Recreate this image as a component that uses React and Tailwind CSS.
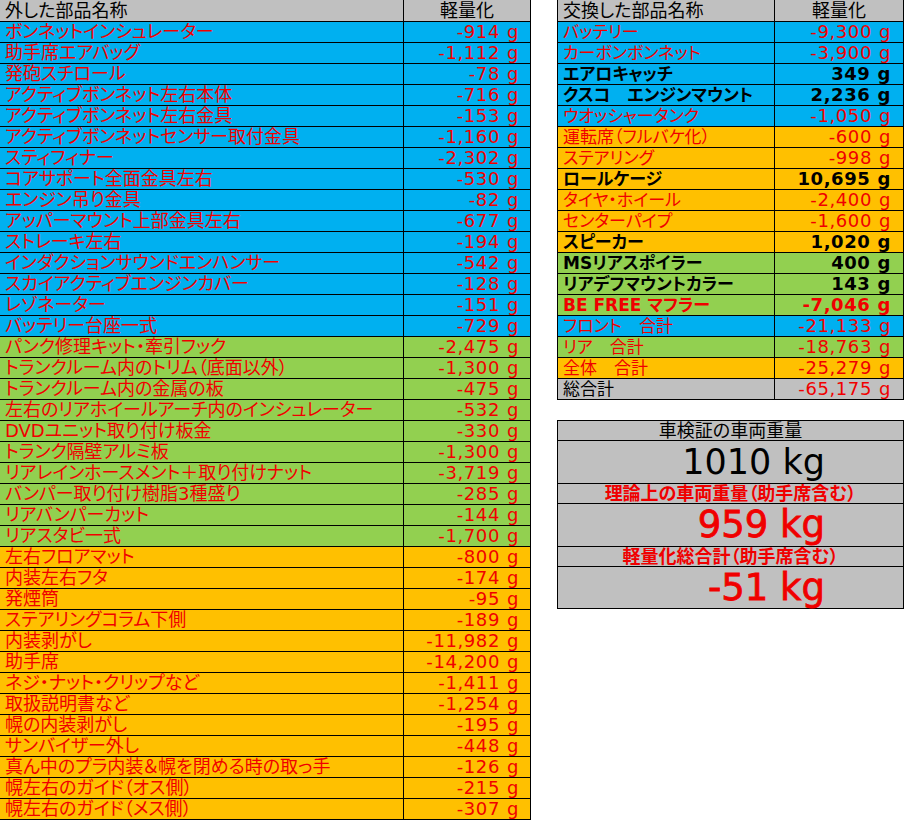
import React from "react";

const BLUE = "bg-[#00b0f0]";
const GREEN = "bg-[#92d050]";
const ORANGE = "bg-[#ffc000]";
const GRAY = "bg-[#c0c0c0]";

const left = [
  ["ボンネットインシュレーター", "-914", BLUE],
  ["助手席エアバッグ", "-1,112", BLUE],
  ["発砲スチロール", "-78", BLUE],
  ["アクティブボンネット左右本体", "-716", BLUE],
  ["アクティブボンネット左右金具", "-153", BLUE],
  ["アクティブボンネットセンサー取付金具", "-1,160", BLUE],
  ["スティフィナー", "-2,302", BLUE],
  ["コアサポート全面金具左右", "-530", BLUE],
  ["エンジン吊り金具", "-82", BLUE],
  ["アッパーマウント上部金具左右", "-677", BLUE],
  ["ストレーキ左右", "-194", BLUE],
  ["インダクションサウンドエンハンサー", "-542", BLUE],
  ["スカイアクティブエンジンカバー", "-128", BLUE],
  ["レゾネーター", "-151", BLUE],
  ["バッテリー台座一式", "-729", BLUE],
  ["パンク修理キット・牽引フック", "-2,475", GREEN],
  ["トランクルーム内のトリム（底面以外）", "-1,300", GREEN],
  ["トランクルーム内の金属の板", "-475", GREEN],
  ["左右のリアホイールアーチ内のインシュレーター", "-532", GREEN],
  ["DVDユニット取り付け板金", "-330", GREEN],
  ["トランク隔壁アルミ板", "-1,300", GREEN],
  ["リアレインホースメント＋取り付けナット", "-3,719", GREEN],
  ["バンパー取り付け樹脂3種盛り", "-285", GREEN],
  ["リアバンパーカット", "-144", GREEN],
  ["リアスタビ一式", "-1,700", GREEN],
  ["左右フロアマット", "-800", ORANGE],
  ["内装左右フタ", "-174", ORANGE],
  ["発煙筒", "-95", ORANGE],
  ["ステアリングコラム下側", "-189", ORANGE],
  ["内装剥がし", "-11,982", ORANGE],
  ["助手席", "-14,200", ORANGE],
  ["ネジ・ナット・クリップなど", "-1,411", ORANGE],
  ["取扱説明書など", "-1,254", ORANGE],
  ["幌の内装剥がし", "-195", ORANGE],
  ["サンバイザー外し", "-448", ORANGE],
  ["真ん中のプラ内装＆幌を閉める時の取っ手", "-126", ORANGE],
  ["幌左右のガイド（オス側）", "-215", ORANGE],
  ["幌左右のガイド（メス側）", "-307", ORANGE],
];

const right = [
  ["バッテリー", "-9,300", BLUE, "r", "r"],
  ["カーボンボンネット", "-3,900", BLUE, "r", "r"],
  ["エアロキャッチ", "349", BLUE, "b", "b"],
  ["クスコ　エンジンマウント", "2,236", BLUE, "b", "b"],
  ["ウオッシャータンク", "-1,050", BLUE, "r", "r"],
  ["運転席（フルバケ化）", "-600", ORANGE, "r", "r"],
  ["ステアリング", "-998", ORANGE, "r", "r"],
  ["ロールケージ", "10,695", ORANGE, "b", "b"],
  ["タイヤ・ホイール", "-2,400", ORANGE, "r", "r"],
  ["センターパイプ", "-1,600", ORANGE, "r", "r"],
  ["スピーカー", "1,020", ORANGE, "b", "b"],
  ["MSリアスポイラー", "400", GREEN, "b", "b"],
  ["リアデフマウントカラー", "143", GREEN, "b", "b"],
  ["BE FREE マフラー", "-7,046", GREEN, "rb", "rb"],
  ["フロント　合計", "-21,133", BLUE, "r", "r"],
  ["リア　合計", "-18,763", GREEN, "r", "r"],
  ["全体　合計", "-25,279", ORANGE, "r", "r"],
  ["総合計", "-65,175", GRAY, "k", "r"],
];

const styleCls = {
  r: "text-[#f00000] font-normal",
  rb: "text-[#f00000] font-bold",
  b: "text-black font-bold",
  k: "text-black font-normal",
};

const JP = "font-['DejaVu_Sans','Noto_Sans_CJK_JP',sans-serif] [font-feature-settings:'palt']";
const NUM = "font-['DejaVu_Sans','Noto_Sans_CJK_JP',sans-serif]";

function Num({ v, cls }) {
  return (
    <span className={`${NUM} text-[18px] tracking-[0.6px] leading-[20px] whitespace-nowrap ${cls}`}>
      {v}
      <span className="ml-[7px]">g</span>
    </span>
  );
}

function LeftRow({ label, value, bg }) {
  return (
    <div className={`flex h-[21px] border-b border-black ${bg}`}>
      <div className={`w-[404px] shrink-0 border-r border-black pl-[5px] overflow-hidden whitespace-nowrap ${JP} text-[18px] leading-[20px] text-[#f00000]`}>
        {label}
      </div>
      <div className="flex-1 flex justify-end items-center pr-[11px] overflow-hidden">
        <Num v={value} cls="text-[#f00000]" />
      </div>
    </div>
  );
}

function RightRow({ label, value, bg, ls, vs }) {
  return (
    <div className={`flex h-[21px] border-b border-black ${bg}`}>
      <div className={`w-[217px] shrink-0 border-r border-black pl-[5px] overflow-hidden whitespace-nowrap ${JP} text-[17px] leading-[20px] ${styleCls[ls]}`}>
        {label}
      </div>
      <div className="flex-1 flex justify-end items-center pr-[12px] overflow-hidden">
        <Num v={value} cls={styleCls[vs]} />
      </div>
    </div>
  );
}

export default function App() {
  return (
    <div className="w-[905px] h-[820px] overflow-hidden bg-white flex items-start">
      <div className="w-[531px] shrink-0 border-r border-black">
        <div className={`flex h-[22px] border-b border-black ${GRAY}`}>
          <div className={`w-[404px] shrink-0 border-r border-black pl-[5px] ${JP} text-[18px] leading-[21px] text-black`}>
            外した部品名称
          </div>
          <div className={`flex-1 text-center ${JP} text-[18px] leading-[21px] text-black`}>軽量化</div>
        </div>
        {left.map(([l, v, bg], i) => (
          <LeftRow key={i} label={l} value={v} bg={bg} />
        ))}
      </div>

      <div className="ml-[26px] w-[347px] shrink-0 flex flex-col">
        <div className="border-l border-r border-black">
          <div className={`flex h-[22px] border-b border-black ${GRAY}`}>
            <div className={`w-[217px] shrink-0 border-r border-black pl-[5px] ${JP} text-[18px] leading-[21px] text-black`}>
              交換した部品名称
            </div>
            <div className={`flex-1 text-center ${JP} text-[18px] leading-[21px] text-black`}>軽量化</div>
          </div>
          {right.map(([l, v, bg, ls, vs], i) => (
            <RightRow key={i} label={l} value={v} bg={bg} ls={ls} vs={vs} />
          ))}
        </div>

        <div className={`mt-[20px] border border-black ${GRAY}`}>
          <div className={`h-[20px] border-b border-black text-center ${JP} text-[18px] leading-[20px] text-black`}>
            車検証の車両重量
          </div>
          <div className="h-[43px] border-b border-black flex items-center justify-end pr-[78px]">
            <span className={`${NUM} text-[35px] leading-[40px] text-black`}>1010 kg</span>
          </div>
          <div className={`h-[20px] border-b border-black text-center ${JP} text-[18px] leading-[19px] text-[#f00000] font-bold`}>
            理論上の車両重量（助手席含む）
          </div>
          <div className="h-[43px] border-b border-black flex items-center justify-end pr-[78px]">
            <span className={`${NUM} text-[37px] leading-[40px] text-[#f00000] [-webkit-text-stroke:0.8px_#f00000]`}>959 kg</span>
          </div>
          <div className={`h-[20px] border-b border-black text-center ${JP} text-[18px] leading-[19px] text-[#f00000] font-bold`}>
            軽量化総合計（助手席含む）
          </div>
          <div className="h-[41px] flex items-center justify-end pr-[78px]">
            <span className={`${NUM} text-[37px] leading-[40px] text-[#f00000] [-webkit-text-stroke:0.8px_#f00000]`}>-51 kg</span>
          </div>
        </div>
      </div>
    </div>
  );
}
